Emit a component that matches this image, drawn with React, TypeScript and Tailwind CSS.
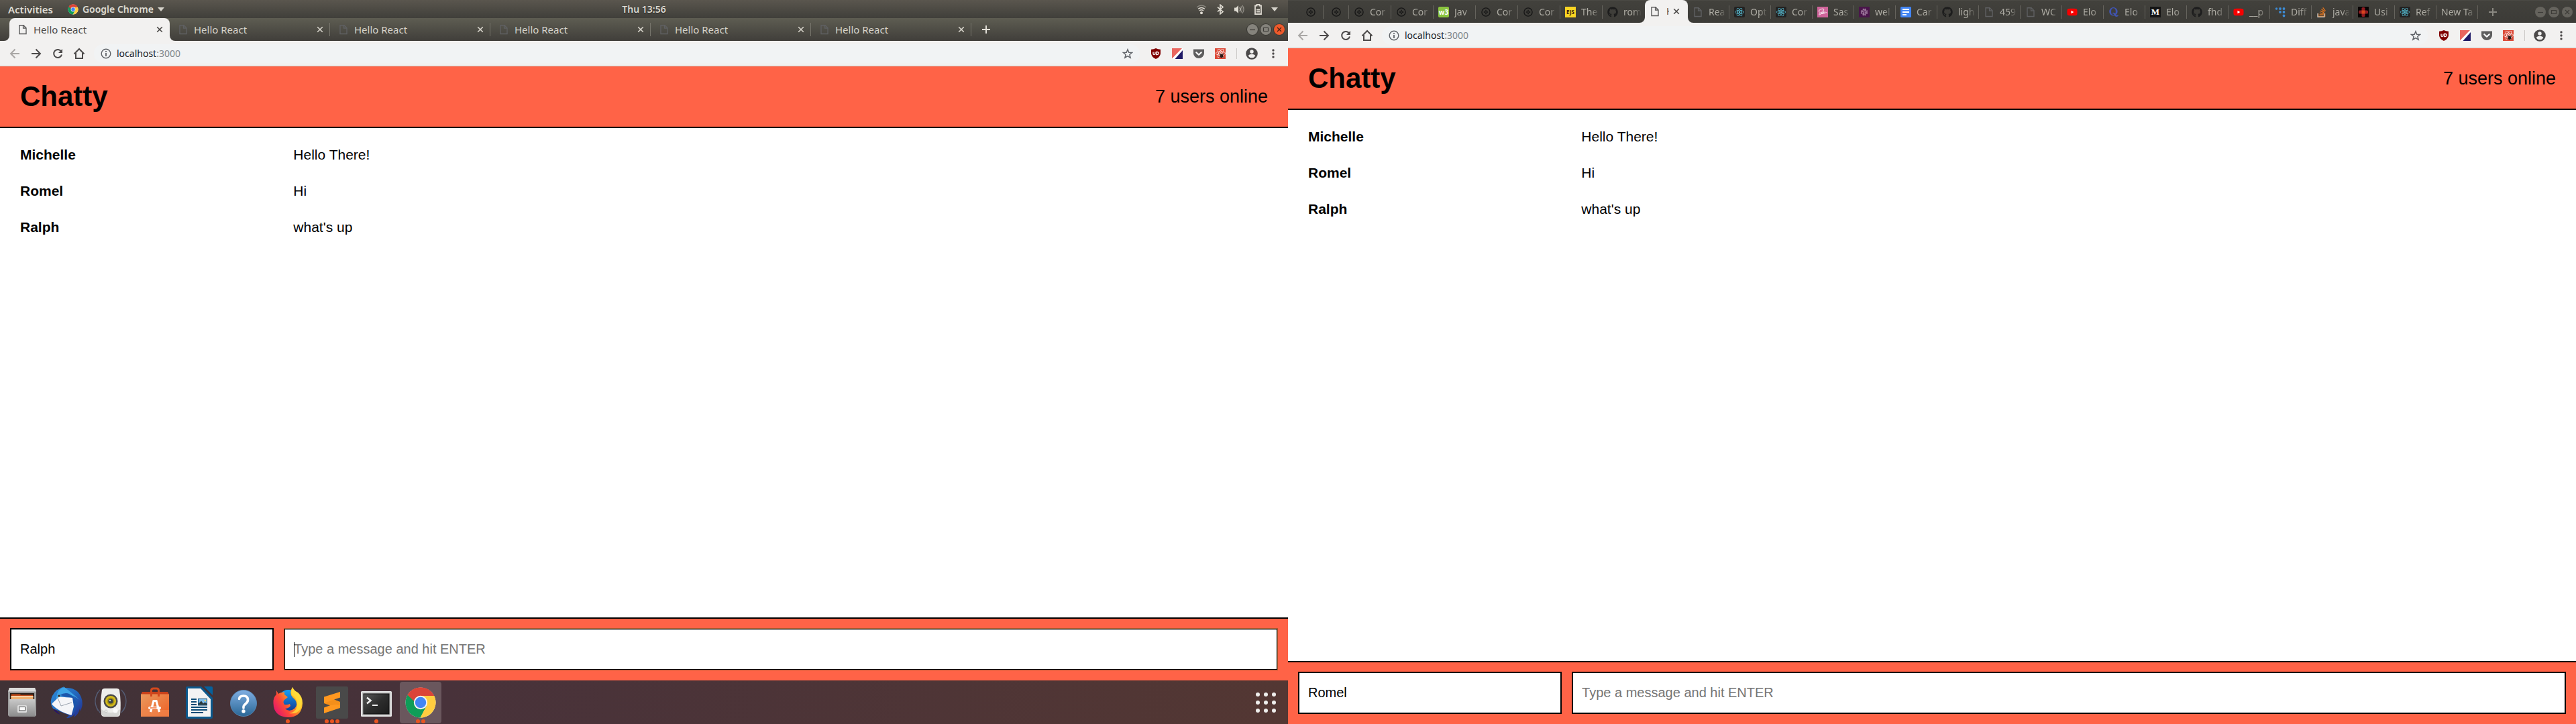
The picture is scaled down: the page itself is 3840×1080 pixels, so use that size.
import React from "react";
import {
  FaGithub,
  FaQuora,
  FaReact,
  FaSass,
  FaSlack,
  FaStackOverflow,
  FaYoutube,
} from "react-icons/fa";

/* ---------- small drawings ---------- */

function ChromeLogo({ className }: { className: string }) {
  return (
    <svg viewBox="0 0 48 48" className={className} aria-hidden="true">
      <circle cx="24" cy="24" r="22.5" fill="#fff" />
      <path d="M24 24 4.5 12.8A22.5 22.5 0 0 1 43.5 12.8L44 14H24Z" fill="#db4437" />
      <path d="M24 24 4.5 12.8A22.5 22.5 0 0 0 24 46.5L33 29Z" fill="#0f9d58" />
      <path d="M24 14H44.2A22.5 22.5 0 0 1 23.5 46.5L32.7 29Z" fill="#ffcd40" />
      <path d="M4.5 12.8 15.3 29 18 16Z" fill="#0f9d58" />
      <path d="M4.5 12.8A22.5 22.5 0 0 1 44.2 14H24A10 10 0 0 0 14.3 22Z" fill="#db4437" />
      <circle cx="24" cy="24" r="10.2" fill="#f1f1f1" />
      <circle cx="24" cy="24" r="8.2" fill="#4285f4" />
    </svg>
  );
}

function PageIcon({ className }: { className: string }) {
  return (
    <svg viewBox="0 0 16 16" className={className} fill="none" stroke="currentColor" strokeWidth="1.4" aria-hidden="true">
      <path d="M3 1.7h6l4 4v8.8H3Z" />
      <path d="M8.6 1.7V6H13" />
    </svg>
  );
}

function CloseIcon({ className }: { className: string }) {
  return (
    <svg viewBox="0 0 10 10" className={className} stroke="currentColor" strokeWidth="1.6" aria-hidden="true">
      <path d="M1.2 1.2l7.6 7.6M8.8 1.2L1.2 8.8" />
    </svg>
  );
}

function PlusIcon({ className }: { className: string }) {
  return (
    <svg viewBox="0 0 12 12" className={className} stroke="currentColor" strokeWidth="2" aria-hidden="true">
      <path d="M6 0v12M0 6h12" />
    </svg>
  );
}

function Caret() {
  return (
    <svg viewBox="0 0 10 6" className="h-[6px] w-[10px]" fill="#d5d2ca" aria-hidden="true">
      <path d="M0 0h10L5 6Z" />
    </svg>
  );
}

function Flare({ side }: { side: "left" | "right" }) {
  return (
    <svg
      viewBox="0 0 8 8"
      className={side === "left" ? "absolute bottom-0 -left-2 size-2" : "absolute -right-2 bottom-0 size-2"}
      fill="#f2f1f0"
      aria-hidden="true"
    >
      <path d={side === "left" ? "M8 0v8H0A8 8 0 0 0 8 0Z" : "M0 0v8h8A8 8 0 0 1 0 0Z"} />
    </svg>
  );
}

/* ---------- top panel ---------- */

function TopPanel() {
  return (
    <div className="grid h-[27px] grid-cols-[1fr_auto_1fr] items-center bg-linear-to-b from-[#5a564e] to-[#403f3a] font-['Noto_Sans',sans-serif] text-sm font-semibold text-[#dfdbd2] [text-shadow:0_1px_1px_#222]">
      <div className="flex items-center gap-[22px] pl-3">
        <button type="button" className="text-[15px] leading-5">Activities</button>
        <button type="button" className="flex items-center gap-[6px] leading-5">
          <ChromeLogo className="size-4" />
          Google Chrome
          <Caret />
        </button>
      </div>
      <time className="leading-5">Thu 13:56</time>
      <div className="flex items-center justify-end gap-3 pr-[15px]">
        <svg viewBox="0 0 16 16" className="size-4" fill="none" stroke="#dfdbd2" strokeWidth="1.6" aria-hidden="true">
          <path d="M1.2 4.8Q8 -.8 14.8 4.8" opacity=".4" />
          <path d="M3.2 7.4Q8 3.6 12.8 7.4M5 10Q8 7.6 11 10" />
          <circle cx="8" cy="13.2" r="1.4" fill="#dfdbd2" stroke="none" />
          <circle cx="8" cy="13.2" r="1.2" />
        </svg>
        <svg viewBox="0 0 16 16" className="size-4" fill="none" stroke="#dfdbd2" strokeWidth="1.7" aria-hidden="true">
          <path d="M4 4.6l8 6.8-4 3.4V1.2l4 3.4-8 6.8" />
        </svg>
        <svg viewBox="0 0 16 16" className="size-4" fill="none" stroke="#dfdbd2" strokeWidth="1.3" aria-hidden="true">
          <path d="M1 5.5h2.5L7 2v12L3.5 10.5H1Z" fill="#dfdbd2" stroke="none" />
          <path d="M9 5.2q2 2.8 0 5.6" />
          <path d="M10.8 3.4q3.4 4.6 0 9.2M12.8 2q4.6 6 0 12" opacity=".45" />
        </svg>
        <svg viewBox="0 0 16 16" className="size-4" fill="none" stroke="#dfdbd2" aria-hidden="true">
          <path d="M4 2.5h2.5V1h4v1.500H13V15H4Z" strokeWidth="1.8" />
          <path d="M6 8.5h5M6 11.5h5" strokeWidth="1.8" />
        </svg>
        <Caret />
      </div>
    </div>
  );
}

/* ---------- window buttons ---------- */

function WindowButtons({ focused }: { focused: boolean }) {
  const base = "flex size-4 items-center justify-center rounded-full";
  const plain = focused
    ? "bg-[#85837c] text-[#3c3b37] shadow-[0_0_0_1px_#383733]"
    : "bg-[#65635d] text-[#3c3b37]";
  const close = focused ? "bg-[#ee5a2b] text-[#4a2214] shadow-[0_0_0_1px_#383733]" : plain;
  return (
    <div className="ml-auto flex items-center gap-1 pr-[5px]">
      <button type="button" aria-label="Minimize" className={`${base} ${plain}`}>
        <svg viewBox="0 0 16 16" className="size-4" stroke="currentColor" strokeWidth="1.2"><path d="M4 8.5h8" /></svg>
      </button>
      <button type="button" aria-label="Maximize" className={`${base} ${plain}`}>
        <svg viewBox="0 0 16 16" className="size-4" fill="none" stroke="currentColor" strokeWidth="1.2"><path d="M4.5 5.5h7v5h-7Z" /></svg>
      </button>
      <button type="button" aria-label="Close window" className={`${base} ${close}`}>
        <svg viewBox="0 0 16 16" className="size-4" stroke="currentColor" strokeWidth="1.2"><path d="M5 5l6 6M11 5l-6 6" /></svg>
      </button>
    </div>
  );
}

/* ---------- tab strips ---------- */

function WideTab({ active, divider }: { active: boolean; divider: boolean }) {
  return (
    <div
      className={
        active
          ? "relative flex w-[239px] shrink-0 items-center rounded-t-lg bg-[#f2f1f0] pr-[10px] pl-3 text-[#4c4a48]"
          : "relative flex w-[239px] shrink-0 items-center pr-[10px] pl-3 text-[#d6d3ca]"
      }
    >
      {active && <Flare side="left" />}
      {active && <Flare side="right" />}
      <PageIcon className={active ? "size-4 text-[#5a5a5a]" : "size-4 text-[#5f6062]"} />
      <span className="ml-2 text-[15px] leading-5">Hello React</span>
      <button type="button" aria-label="Close tab" className="ml-auto">
        <CloseIcon className="size-[10px]" />
      </button>
      {divider && <span className="absolute right-0 h-5 w-px bg-[#77756c]" />}
    </div>
  );
}

function WideTabStrip() {
  const tabs = [0, 1, 2, 3, 4, 5];
  return (
    <div className="flex h-[34px] items-stretch bg-linear-to-b from-[#5e5d52] to-[#403e3a] pl-[14px]">
      {tabs.map((t) => (
        <WideTab key={t} active={t === 0} divider={t !== 0} />
      ))}
      <button type="button" aria-label="New tab" className="ml-4 text-[#e3e0d8]">
        <PlusIcon className="size-3" />
      </button>
      <WindowButtons focused />
    </div>
  );
}

function DevIcon() {
  return (
    <svg viewBox="0 0 16 16" className="size-4" fill="none" stroke="#151515" aria-hidden="true">
      <circle cx="8" cy="8" r="6.1" strokeWidth="1.3" />
      <path d="M8 4.8v6.4M4.8 8h6.4" strokeWidth="1.4" />
      <circle cx="8" cy="8" r="1.7" fill="#151515" stroke="none" />
      <circle cx="8" cy="8" r=".8" fill="#55534e" stroke="none" />
    </svg>
  );
}

function DarkReact() {
  return (
    <span className="flex size-4 items-center justify-center rounded-[2px] bg-[#222]">
      <FaReact className="size-[14px] text-[#5ac8e0]" />
    </span>
  );
}

function YouTube() {
  return (
    <span className="relative flex size-4 items-center justify-center">
      <span className="absolute size-[6px] bg-white" />
      <FaYoutube className="relative size-4 text-[#f60000]" />
    </span>
  );
}

function Octocat() {
  return <FaGithub className="size-4 text-[#1d1d1d]" />;
}

function BlankPage() {
  return <PageIcon className="size-4 text-[#5f6062]" />;
}

type NarrowTabData = { icon?: React.ReactNode; text?: string; size: string; edge?: boolean };

const narrowBefore: NarrowTabData[] = [
  { icon: <DevIcon />, size: "w-[39px]", edge: true },
  { icon: <DevIcon />, size: "w-[38px]", edge: true },
  { icon: <DevIcon />, text: "Cor", size: "w-[63px]", edge: true },
  { icon: <DevIcon />, text: "Cor", size: "w-[63px]", edge: true },
  {
    icon: (
      <span className="flex size-4 items-center justify-center overflow-hidden rounded-[2px] bg-[#8ac43f] text-[10px] leading-4 font-bold text-white">w3</span>
    ),
    text: "Jav",
    size: "w-[63px]",
    edge: true,
  },
  { icon: <DevIcon />, text: "Cor", size: "w-[63px]", edge: true },
  { icon: <DevIcon />, text: "Cor", size: "w-[63px]", edge: true },
  {
    icon: (
      <span className="flex size-4 items-center justify-center overflow-hidden bg-[#f9d423] text-[8px] leading-4 font-bold text-[#3a1d0d]">EJS</span>
    ),
    text: "The",
    size: "w-[63px]",
    edge: true,
  },
  { icon: <Octocat />, text: "rom", size: "w-[63px]" },
];

const narrowAfter: NarrowTabData[] = [
  { icon: <BlankPage />, text: "Rea", size: "w-[62px]", edge: true },
  { icon: <DarkReact />, text: "Opt", size: "w-[62px]", edge: true },
  { icon: <DarkReact />, text: "Cor", size: "w-[62px]", edge: true },
  {
    icon: (
      <span className="flex size-4 items-center justify-center bg-[#cf649a]">
        <FaSass className="size-[13px] text-white" />
      </span>
    ),
    text: "Sas",
    size: "w-[62px]",
    edge: true,
  },
  {
    icon: (
      <span className="flex size-4 items-center justify-center bg-[#4a154b]">
        <FaSlack className="size-3 text-[#a583a5]" />
      </span>
    ),
    text: "wel",
    size: "w-[62px]",
    edge: true,
  },
  {
    icon: (
      <svg viewBox="0 0 16 16" className="size-4" aria-hidden="true">
        <rect width="16" height="16" rx="1.5" fill="#4285f4" />
        <path d="M3 4h10M3 8h10M3 12h6" stroke="#fff" strokeWidth="2" />
      </svg>
    ),
    text: "Car",
    size: "w-[62px]",
    edge: true,
  },
  { icon: <Octocat />, text: "ligh", size: "w-[62px]", edge: true },
  { icon: <BlankPage />, text: "459", size: "w-[62px]", edge: true },
  { icon: <BlankPage />, text: "WC", size: "w-[62px]", edge: true },
  { icon: <YouTube />, text: "Elo", size: "w-[62px]", edge: true },
  { icon: <FaQuora className="size-4 text-[#4054b2]" />, text: "Elo", size: "w-[62px]", edge: true },
  {
    icon: (
      <span className="flex size-4 items-center justify-center bg-[#141414] font-['Liberation_Serif',serif] text-[13px] leading-4 font-bold text-white">M</span>
    ),
    text: "Elo",
    size: "w-[62px]",
    edge: true,
  },
  { icon: <Octocat />, text: "fhd", size: "w-[62px]", edge: true },
  { icon: <YouTube />, text: "__p", size: "w-[62px]", edge: true },
  {
    icon: (
      <svg viewBox="0 0 16 16" className="size-4" fill="#3d8bd4" aria-hidden="true">
        <circle cx="2.5" cy="3" r="1.7" />
        <circle cx="8" cy="3" r="1.9" />
        <circle cx="13.5" cy="3" r="1.9" />
        <circle cx="8" cy="8" r="1.9" />
        <circle cx="13.5" cy="8" r="1.9" />
        <circle cx="13.5" cy="13.5" r="1.9" />
      </svg>
    ),
    text: "Diff",
    size: "w-[62px]",
    edge: true,
  },
  {
    icon: (
      <span className="relative flex size-4 items-center justify-center">
        <FaStackOverflow className="size-4 text-[#e8751a]" />
        <svg viewBox="0 0 16 16" className="absolute inset-0 size-4" fill="none" stroke="#bcbbb8" strokeWidth="1.5" aria-hidden="true">
          <path d="M2 10v5.2h9.8V10" />
        </svg>
      </span>
    ),
    text: "java",
    size: "w-[62px]",
    edge: true,
  },
  {
    icon: (
      <svg viewBox="0 0 16 16" className="size-4" aria-hidden="true">
        <rect width="16" height="16" fill="#080303" />
        <rect x="5.5" y="1" width="5" height="14" rx="1.5" fill="#8f1c22" />
        <rect x="1" y="5.5" width="14" height="5" rx="1.5" fill="#8f1c22" />
        <rect x="5.5" y="5.5" width="5" height="5" fill="#d8441d" />
      </svg>
    ),
    text: "Usi",
    size: "w-[62px]",
    edge: true,
  },
  { icon: <DarkReact />, text: "Ref", size: "w-[62px]", edge: true },
  { text: "New Ta", size: "w-[62px]", edge: true },
];

function NarrowTab({ icon, text, size, edge }: NarrowTabData) {
  return (
    <div className={`relative flex shrink-0 items-center text-[#aeaca4] ${size} ${text ? "gap-[8px] pr-[5px] pl-[7px]" : "justify-center"}`}>
      {icon && <span className="shrink-0">{icon}</span>}
      {text && (
        <span className="w-full min-w-0 overflow-hidden text-sm leading-5 whitespace-nowrap [mask-image:linear-gradient(to_left,transparent,#000_12px)]">
          {text}
        </span>
      )}
      {edge && <span className="absolute right-0 h-5 w-px bg-[#65635d]" />}
    </div>
  );
}

function NarrowTabStrip() {
  return (
    <div className="flex h-[34px] items-stretch border-t border-[#4b4a45] bg-linear-to-b from-[#42413c] to-[#3c3b37] pl-[14px]">
      {narrowBefore.map((t, i) => (
        <NarrowTab key={i} {...t} />
      ))}
      <div className="relative -mt-px flex w-[64px] shrink-0 items-center rounded-t-lg bg-[#f2f1f0] pl-[7px] text-[#4c4a48]">
        <Flare side="left" />
        <Flare side="right" />
        <PageIcon className="size-4 text-[#5a5a5a]" />
        <span className="ml-[9px] w-1 overflow-hidden text-sm leading-5">H</span>
        <button type="button" aria-label="Close tab" className="ml-[6px]">
          <CloseIcon className="size-[10px]" />
        </button>
      </div>
      {narrowAfter.map((t, i) => (
        <NarrowTab key={i} {...t} />
      ))}
      <button type="button" aria-label="New tab" className="ml-4 text-[#8a8881]">
        <PlusIcon className="size-3" />
      </button>
      <WindowButtons focused={false} />
    </div>
  );
}

/* ---------- toolbar ---------- */

const toolButton = "flex h-7 w-8 shrink-0 items-center justify-center";

function Toolbar({ id }: { id: string }) {
  return (
    <div className="flex h-[38px] items-center border-b border-[#c8cbc9] bg-[#f2f1f0] px-[6px] font-['Noto_Sans',sans-serif] text-[#4c4a4a]">
      <button type="button" aria-label="Back" className={`${toolButton} text-[#a9a7a5]`}>
        <svg viewBox="0 0 16 16" className="size-4" fill="none" stroke="currentColor" strokeWidth="2"><path d="M15 8H2.5M8.5 1.5L2 8l6.5 6.5" /></svg>
      </button>
      <button type="button" aria-label="Forward" className={toolButton}>
        <svg viewBox="0 0 16 16" className="size-4" fill="none" stroke="currentColor" strokeWidth="2"><path d="M1 8h12.5M7.5 1.5L14 8l-6.5 6.5" /></svg>
      </button>
      <button type="button" aria-label="Reload" className={toolButton}>
        <svg viewBox="0 0 16 16" className="size-4" fill="none" stroke="currentColor" strokeWidth="2">
          <path d="M13.3 4.8A6 6 0 1 0 14 9.5" />
          <path d="M15 1v6H9Z" fill="currentColor" stroke="none" />
        </svg>
      </button>
      <button type="button" aria-label="Home" className={toolButton}>
        <svg viewBox="0 0 18 18" className="size-[18px]" fill="none" stroke="currentColor" strokeWidth="2"><path d="M1.5 9.5L9 2l7.5 7.5M4 8v8h10V8" /></svg>
      </button>
      <div className="ml-[6px] flex h-7 min-w-0 flex-1 items-center rounded-full bg-[#f1f3f4] px-[10px]">
        <svg viewBox="0 0 16 16" className="size-4 shrink-0" fill="none" stroke="#5f6368" strokeWidth="1.4" aria-hidden="true">
          <circle cx="8" cy="8" r="6.8" />
          <path d="M8 7v5M8 4v1.8" strokeWidth="1.8" />
        </svg>
        <a href="#page" id={id} className="ml-2 flex-1 text-sm leading-5 text-[#202124]">
          localhost<span className="text-[#80868b]">:3000</span>
        </a>
        <button type="button" aria-label="Bookmark this page">
          <svg viewBox="0 0 16 16" className="size-4" fill="none" stroke="#5f6368" strokeWidth="1.5"><path d="M8 1.8l1.8 4.4 4.7.3-3.6 3 1.2 4.7L8 11.7l-4.1 2.5 1.2-4.7-3.6-3 4.7-.3Z" /></svg>
        </button>
      </div>
      <button type="button" aria-label="uBlock Origin" className={`${toolButton} ml-2`}>
        <svg viewBox="0 0 16 16" className="size-4" fill="none" stroke="#fff" strokeWidth="1.3">
          <path d="M8 0Q11 1.5 15 1.8V8q-.5 5-7 8Q1.5 13 1 8V1.8Q5 1.5 8 0Z" fill="#800000" stroke="none" />
          <path d="M4 5.5v2.7q0 1.2 1.5 1.2T7 8.2V5.5V9.2M8.8 5.5h1.4q2 .2 2 2t-2 2H8.8Z" />
        </svg>
      </button>
      <button type="button" aria-label="Color extension" className={toolButton}>
        <svg viewBox="0 0 16 16" className="size-4">
          <rect width="16" height="16" fill="#fff" />
          <path d="M0 0h15L0 15.5Z" fill="#e9665f" />
          <path d="M16 3v13H4.5Z" fill="#1f1a66" />
        </svg>
      </button>
      <button type="button" aria-label="Save to Pocket" className={toolButton}>
        <svg viewBox="0 0 16 16" className="size-4" fill="none">
          <path d="M0 1.5h16V7.5a8 7.5 0 0 1-16 0Z" fill="#5e5e5e" />
          <path d="M4.3 6.2L8 9.7l3.7-3.5" stroke="#fff" strokeWidth="2.2" strokeLinecap="round" strokeLinejoin="round" />
        </svg>
      </button>
      <button type="button" aria-label="React developer tools" className={toolButton}>
        <span className="relative flex size-4 items-center justify-center bg-[#dc4a38]">
          <FaReact className="size-[15px] text-white" />
          <svg viewBox="0 0 8 8" className="absolute right-[2px] bottom-[1px] size-2" fill="none" stroke="#2b1a17" aria-hidden="true">
            <ellipse cx="4" cy="4.5" rx="2.2" ry="2.8" fill="#2b1a17" stroke="none" />
            <path d="M.5 2l7 4.5M7.5 2l-7 4.5M2 .5l1 2M6 .5l-1 2" strokeWidth=".9" />
          </svg>
        </span>
      </button>
      <span className="ml-2 h-4 w-px bg-[#cbc9c7]" />
      <button type="button" aria-label="Profile" className={`${toolButton} ml-[6px]`}>
        <svg viewBox="0 0 18 18" className="size-[18px]">
          <circle cx="9" cy="9" r="8.8" fill="#4c4a4a" />
          <circle cx="9" cy="6" r="2.7" fill="#f2f1f0" />
          <path d="M3.8 12.5Q4.8 9.8 9 9.8t5.2 2.7Q12.5 15.3 9 15.3T3.8 12.5Z" fill="#f2f1f0" />
        </svg>
      </button>
      <button type="button" aria-label="Browser menu" className={toolButton}>
        <svg viewBox="0 0 4 14" className="h-[14px] w-1" fill="currentColor">
          <circle cx="2" cy="2" r="1.7" />
          <circle cx="2" cy="7" r="1.7" />
          <circle cx="2" cy="12" r="1.7" />
        </svg>
      </button>
    </div>
  );
}

/* ---------- chat page ---------- */

const messages = [
  { user: "Michelle", content: "Hello There!" },
  { user: "Romel", content: "Hi" },
  { user: "Ralph", content: "what's up" },
];

function ChatPage({ user, typing }: { user: string; typing: boolean }) {
  return (
    <div className="flex flex-1 flex-col bg-white font-['Liberation_Sans',Arial,sans-serif] text-[21px] leading-6 text-black">
      <header className="flex h-[92px] items-center justify-between border-b-2 border-black bg-[#ff6347] px-[30px]">
        <h1 className="text-[42px] leading-[48px] font-bold">Chatty</h1>
        <span className="text-[27px] leading-8">7 users online</span>
      </header>
      <main className="flex flex-1 flex-col gap-[30px] px-[30px] py-[28px]">
        {messages.map((m) => (
          <div key={m.user} className="grid grid-cols-[21.9%_1fr]">
            <span className="font-bold">{m.user}</span>
            <span>{m.content}</span>
          </div>
        ))}
      </main>
      <footer className="flex gap-[15px] border-t-2 border-black bg-[#ff6347] px-[15px] pt-[14px] pb-[15px] text-xl">
        <input
          aria-label="Your name"
          defaultValue={user}
          className="h-[63px] w-[20.8%] border-2 border-black bg-white px-[13px] outline-none"
        />
        <div className="relative flex-1">
          <input
            aria-label="Message"
            placeholder="Type a message and hit ENTER"
            className={
              typing
                ? "h-[63px] w-full border border-[#a85a30] bg-white px-[14px] shadow-[inset_0_0_0_1px_#000] outline-none placeholder:text-[#757575]"
                : "h-[63px] w-full border-2 border-black bg-white px-[13px] outline-none placeholder:text-[#757575]"
            }
          />
          {typing && <span className="absolute top-[21px] left-[15px] h-[22px] w-px bg-black" />}
        </div>
      </footer>
    </div>
  );
}

/* ---------- dock ---------- */

function FilesIcon() {
  return (
    <svg viewBox="0 0 48 48" className="size-12" aria-hidden="true">
      <defs>
        <linearGradient id="cab" x1="0" y1="0" x2="0" y2="1">
          <stop offset="0" stopColor="#c9c9c9" />
          <stop offset="1" stopColor="#8b8b8b" />
        </linearGradient>
      </defs>
      <path d="M3 8 5 2h38l2 6v35l-2 2H5l-2-2Z" fill="#9c9c9c" />
      <path d="M3 7.5 5 2h38l2 5.5Z" fill="#dcdcdc" />
      <rect x="6" y="10" width="36" height="10" fill="#2a1f1a" />
      <path d="M8 11.5h13l1 1h18V20H7Z" fill="#c14a17" />
      <path d="M7.5 14h33v6h-33Z" fill="#f0b070" />
      <path d="M7.5 15h33" stroke="#fff1dc" strokeWidth="1" />
      <rect x="5" y="19" width="38" height="26" fill="url(#cab)" />
      <rect x="17" y="28" width="14" height="11" rx="1.5" fill="#dedede" />
      <rect x="19.5" y="30.5" width="9" height="5.5" fill="#fafafa" stroke="#4c4c4c" />
    </svg>
  );
}

function ThunderbirdIcon() {
  return (
    <svg viewBox="0 0 48 48" className="size-12" aria-hidden="true">
      <defs>
        <linearGradient id="tb" x1="0" y1="0" x2="1" y2="1">
          <stop offset="0" stopColor="#2f8fdc" />
          <stop offset=".5" stopColor="#2268bd" />
          <stop offset="1" stopColor="#23288a" />
        </linearGradient>
      </defs>
      <path d="M4 33Q-2 24 3 14Q8 4 21 0L19 2.5Q32 0 41 8Q49 17 47.5 29L45 37L44 33Q42 42 35 46L37 41Q30 48 24 47L28 43Z" fill="url(#tb)" />
      <path d="M9 16Q11 3 21 1Q30 8 44 20Q32 11 26 13Q15 12 9 20Z" fill="#3ca3e6" />
      <path d="M14 13Q26 6 34 16L43 28L38 26Q38 34 34 40L33 17Z" fill="#1b56ac" />
      <path d="M3 25 13 15.5Q25 16 33 17L35 30 31.5 43Q13 38 2.5 27Z" fill="#f4f5f8" />
      <path d="M11 17 16 29 32 24" fill="none" stroke="#9ba4b0" strokeWidth="1" />
      <path d="M4 34Q9 40 15 42L9 36Z" fill="#25136b" />
      <circle cx="13" cy="14" r="1.6" fill="#3a2418" />
    </svg>
  );
}

function SpeakerIcon() {
  return (
    <svg viewBox="0 0 48 48" className="size-12" aria-hidden="true">
      <g fill="none" stroke="#5d7395" strokeWidth="1.2" opacity=".65">
        <path d="M8 5Q-6 22 8 39M5 8Q-3 22 5 36M40 5Q54 22 40 39M43 8Q51 22 43 36" />
      </g>
      <path d="M11 5Q12 3 15 3h18q3 0 4 2Q40 24 38 42q-1 3-4 3H14q-3 0-4-3Q8 24 11 5Z" fill="#eeeeec" />
      <path d="M10 34Q24 44 38 34L37.5 42q-1 2-4 2H14.5q-3 0-4-2Z" fill="#d6d6d4" />
      <circle cx="24" cy="22" r="10.5" fill="#494949" />
      <circle cx="24" cy="22" r="8" fill="#d3bb1c" />
      <circle cx="24" cy="22" r="5.5" fill="#a99412" />
      <circle cx="24" cy="22" r="3.6" fill="#3b4347" />
      <circle cx="23" cy="21" r="1.2" fill="#c9d2d6" />
      <circle cx="31" cy="36" r="3.5" fill="#fbfbfb" />
      <circle cx="17" cy="37" r="2" fill="none" stroke="#c8c8c8" />
    </svg>
  );
}

function SoftwareIcon() {
  return (
    <svg viewBox="0 0 48 48" className="size-12" aria-hidden="true">
      <defs>
        <linearGradient id="bag" x1="0" y1="0" x2="1" y2="1">
          <stop offset="0" stopColor="#ea9a5e" />
          <stop offset="1" stopColor="#ee5f24" />
        </linearGradient>
      </defs>
      <path d="M3 12 5 8h38l2 4Z" fill="#c9411a" />
      <rect x="3" y="11.5" width="42" height="33.5" fill="url(#bag)" />
      <rect x="3" y="35" width="42" height="10" fill="#f08a52" opacity=".6" />
      <path d="M18.5 15V6q0-3 3-3h5q3 0 3 3v9" fill="none" stroke="#d4481d" strokeWidth="3" />
      <path d="M17.5 38 22 21.5h4L30.5 38" fill="none" stroke="#fff" strokeWidth="3.2" />
      <path d="M16 32h15" stroke="#fff" strokeWidth="4" strokeLinecap="round" />
      <path d="M16.5 32h10" stroke="#ee6e35" strokeWidth="1.5" />
    </svg>
  );
}

function WriterIcon() {
  return (
    <svg viewBox="0 0 48 48" className="size-12" aria-hidden="true">
      <path d="M6 0h21l17 17v29q0 2-2 2H6q-2 0-2-2V2q0-2 2-2Z" fill="#0b588c" />
      <path d="M31 0h11q2 0 2 2v11Z" fill="#06619c" />
      <path d="M7 3h19l15 16v26H7Z" fill="#f3f3f3" />
      <path d="M12 19h8M12 23h8M12 27h8M12 31h24M12 35h24M12 39h18" stroke="#0b4a75" strokeWidth="2" />
      <rect x="22" y="18" width="14" height="10.5" fill="#0b4a75" />
      <rect x="23" y="19" width="12" height="8.5" fill="#7dbdea" />
      <path d="M23 27.5v-2l4-4 3 4 2.5-2 2.5 2v2Z" fill="#2c3a3c" />
      <circle cx="33" cy="21" r="1.3" fill="#f5d76a" />
    </svg>
  );
}

function HelpIcon() {
  return (
    <svg viewBox="0 0 48 48" className="size-12" aria-hidden="true">
      <defs>
        <linearGradient id="help" x1="0" y1="0" x2="0" y2="1">
          <stop offset="0" stopColor="#7faee2" />
          <stop offset="1" stopColor="#2a6796" />
        </linearGradient>
      </defs>
      <circle cx="24" cy="25" r="19.5" fill="url(#help)" stroke="#5585b4" />
      <path d="M17.5 18.5Q18 14 24 14q6.5 0 6.5 6 0 3.5-3.5 6t-3 6" fill="none" stroke="#fff" strokeWidth="3.6" strokeLinecap="round" />
      <circle cx="24" cy="37" r="2.7" fill="#fff" />
    </svg>
  );
}

function FirefoxIcon() {
  return (
    <svg viewBox="0 0 48 48" className="size-12" aria-hidden="true">
      <defs>
        <linearGradient id="fox" x1="1" y1=".1" x2="0" y2=".8">
          <stop offset="0" stopColor="#fff44f" />
          <stop offset=".35" stopColor="#ffb01f" />
          <stop offset=".65" stopColor="#ff4b36" />
          <stop offset="1" stopColor="#e0136f" />
        </linearGradient>
        <linearGradient id="globe" x1="0" y1="0" x2="0" y2="1">
          <stop offset="0" stopColor="#15a0f5" />
          <stop offset="1" stopColor="#123a94" />
        </linearGradient>
      </defs>
      <circle cx="25" cy="21" r="16" fill="url(#globe)" />
      <path d="M7 6 10 11Q12 9 16 9L19 8V12L24 16 19 20Q16 23 19 27Q23 28 27 26L28 29Q25 33 20 33Q26 39 34 33Q40 27 35 20Q26 13 29 5L31 1Q33 6 39 9Q46 15 46 25Q45 46 24 46Q3 45 2.5 25Q2 16 7 12Z" fill="url(#fox)" />
      <path d="M31 1Q28 8 30 13Q38 17 38 26Q38 38 26 40Q38 42 43 33Q48 21 40 10L36 7.5Q32 5 31 1Z" fill="#ffe13c" opacity=".75" />
    </svg>
  );
}

function SublimeIcon() {
  return (
    <svg viewBox="0 0 48 48" className="size-12" aria-hidden="true">
      <rect width="48" height="48" rx="2" fill="#494949" />
      <path d="M12 15.5 36 8v8.5l-9 3 9 3.5v9L12 40v-8.5l9-3.2-9-3.3Z" fill="#ff9820" />
      <path d="M21 28.3 12 25l15-5.5 9 3.5v5l-6-1Z" fill="#e07f12" opacity=".35" />
    </svg>
  );
}

function TerminalIcon() {
  return (
    <svg viewBox="0 0 48 48" className="size-12" aria-hidden="true">
      <defs>
        <linearGradient id="term" x1="0" y1="0" x2="1" y2="1">
          <stop offset="0" stopColor="#595959" />
          <stop offset=".5" stopColor="#2d2d2d" />
          <stop offset="1" stopColor="#1c1c1c" />
        </linearGradient>
      </defs>
      <rect x="1" y="7" width="46" height="38" rx="1.5" fill="#e4e4e4" />
      <rect x="3" y="9" width="42" height="34" fill="#b8b8b8" />
      <rect x="5" y="11" width="38" height="30" fill="url(#term)" stroke="#111" />
      <path d="M10 16.5l5.5 4.5-5.5 4.5" fill="none" stroke="#eee" strokeWidth="2.6" />
      <path d="M18 28h8" stroke="#eee" strokeWidth="2" />
    </svg>
  );
}

const dockItems = [
  { name: "Files", icon: <FilesIcon />, windows: 0 },
  { name: "Thunderbird Mail", icon: <ThunderbirdIcon />, windows: 0 },
  { name: "Rhythmbox", icon: <SpeakerIcon />, windows: 0 },
  { name: "Ubuntu Software", icon: <SoftwareIcon />, windows: 0 },
  { name: "LibreOffice Writer", icon: <WriterIcon />, windows: 0 },
  { name: "Help", icon: <HelpIcon />, windows: 0 },
  { name: "Firefox", icon: <FirefoxIcon />, windows: 1 },
  { name: "Sublime Text", icon: <SublimeIcon />, windows: 3 },
  { name: "Terminal", icon: <TerminalIcon />, windows: 1 },
  { name: "Google Chrome", icon: <ChromeLogo className="size-12" />, windows: 2 },
];

function Dock() {
  return (
    <nav aria-label="Dock" className="flex h-[65px] items-center gap-1 bg-linear-to-r from-[#403236] via-[#48323a] via-35% to-[#533733] pr-[18px] pl-[2px]">
      {dockItems.map((d) => (
        <button
          key={d.name}
          type="button"
          aria-label={d.name}
          className={
            d.name === "Google Chrome"
              ? "relative flex size-[62px] items-center justify-center rounded-[4px] bg-[#6a575d]"
              : "relative flex size-[62px] items-center justify-center"
          }
        >
          {d.icon}
          <span className="absolute inset-x-0 bottom-0 flex justify-center gap-[2px]">
            {Array.from({ length: d.windows }, (_, i) => (
              <span key={i} className="size-[6px] rounded-full bg-[#e95420]" />
            ))}
          </span>
        </button>
      ))}
      <button type="button" aria-label="Show applications" className="ml-auto grid grid-cols-3 gap-[6px]">
        {Array.from({ length: 9 }, (_, i) => (
          <span key={i} className="size-[6px] rounded-full bg-[#eeeeec]" />
        ))}
      </button>
    </nav>
  );
}

/* ---------- desktop ---------- */

export default function App() {
  return (
    <div className="grid min-h-screen grid-cols-2">
      <section className="flex min-w-0 flex-col">
        <TopPanel />
        <div className="font-['Noto_Sans',sans-serif]">
          <WideTabStrip />
        </div>
        <Toolbar id="address-left" />
        <ChatPage user="Ralph" typing />
        <Dock />
      </section>
      <section className="flex min-w-0 flex-col">
        <div className="font-['Noto_Sans',sans-serif]">
          <NarrowTabStrip />
        </div>
        <Toolbar id="address-right" />
        <ChatPage user="Romel" typing={false} />
      </section>
    </div>
  );
}
